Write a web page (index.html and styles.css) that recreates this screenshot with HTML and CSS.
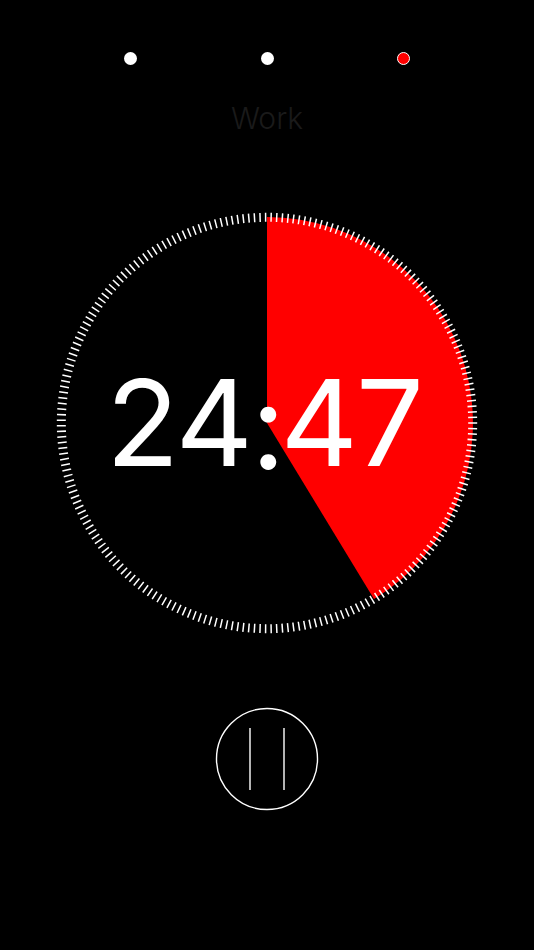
FILE: index.html
```html
<!DOCTYPE html>
<html lang="en">
<head>
    <meta charset="UTF-8">
    <meta name="viewport" content="width=device-width, initial-scale=1.0">
    <title>Work timer</title>
    <link rel="stylesheet" href="styles.css">
</head>
<body>
    <div class="steps">
        <span class="step"></span>
        <span class="step"></span>
        <span class="step active"></span>
    </div>

    <h1 class="label">Work</h1>

    <div class="dial">
        <svg class="dial-face" viewBox="0 0 420 420" width="420" height="420">
            <!-- wedge runs to 148.7deg = 24:47 of a 60 minute face -->
            <path class="wedge" d="M210 210V4A206 206 0 0 1 317 386Z"/>
            <circle class="ticks" cx="210" cy="210" r="205.7" pathLength="231"/>
        </svg>
        <div class="time">24<span class="colon">:</span>47</div>
    </div>

    <button class="pause" type="button" aria-label="Pause">
        <svg viewBox="0 0 104 104" width="104" height="104">
            <circle cx="52" cy="52" r="50.5"/>
            <path d="M35 21V83M69 21V83"/>
        </svg>
    </button>
</body>
</html>
```

FILE: styles.css
```css
body {
    font-family: Inter, "Liberation Sans", sans-serif;
    margin: 0;
    height: 950px;
    overflow: hidden;
    background-color: #000000;
    color: #ffffff;
    display: flex;
    flex-direction: column;
    align-items: center;
}

.steps {
    display: flex;
    justify-content: space-between;
    width: 286px;
    margin-top: 52px;
}

.step {
    width: 13px;
    height: 13px;
    border-radius: 50%;
    box-sizing: border-box;
    background-color: #ffffff;
}

.step.active {
    background-color: #ff0000;
    border: 1px solid #ffffff;
}

.label {
    margin: 33px 0 0;
    height: 40px;
    font-size: 30px;
    line-height: 40px;
    font-weight: 300;
    color: #1a1a1a;
}

.dial {
    display: grid;
    place-items: center;
    width: 420px;
    height: 420px;
    margin-top: 75px;
}

.dial-face,
.time {
    grid-area: 1 / 1;
}

.dial-face {
    overflow: visible;
}

.wedge {
    fill: #ff0000;
}

.ticks {
    fill: none;
    stroke: #ffffff;
    stroke-width: 9;
    stroke-dasharray: 0.27 0.73;
    stroke-dashoffset: 0.135;
}

.time {
    font-size: 120px;
    line-height: 1;
    font-weight: 400;
    letter-spacing: -2px;
    padding-right: 6px;
}

.colon {
    display: inline-block;
    letter-spacing: -5px;
    transform: translateY(3px);
}

.pause {
    display: block;
    width: 104px;
    height: 104px;
    margin-top: 74px;
    padding: 0;
    background: none;
    border: none;
}

.pause svg {
    display: block;
    fill: none;
    stroke: #ffffff;
    stroke-width: 1.4;
}
```
